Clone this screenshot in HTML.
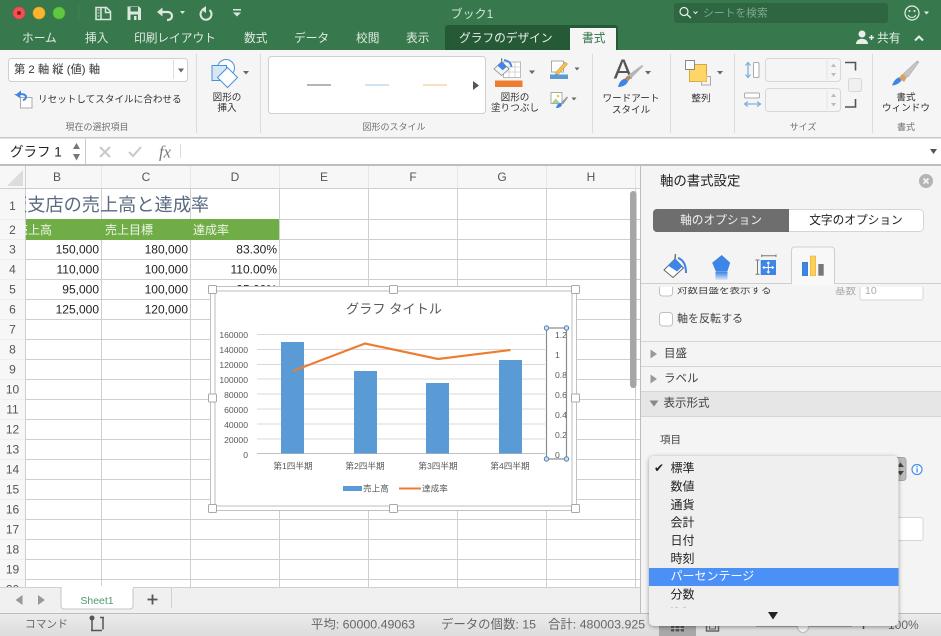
<!DOCTYPE html>
<html><head><meta charset="utf-8">
<style>
html,body{margin:0;padding:0;background:#fff;width:941px;height:636px;overflow:hidden}
svg{display:block}
text{font-family:"Liberation Sans","Noto Sans CJK JP",sans-serif;dominant-baseline:central;fill:#333;font-size:12px}
.m{text-anchor:middle}.e{text-anchor:end}
.tab{fill:#dfeae2;font-size:11.7px}
.rb{font-size:9.6px;fill:#333}
.gl{font-size:9px;fill:#707070}
.rh{font-size:12px;fill:#555;text-anchor:middle}
.n{font-size:12px;fill:#222;text-anchor:end}
.ax{font-size:8.6px;fill:#595959}
.it{font-size:12px;fill:#222}
.st{font-size:12.4px;fill:#666}
</style></head><body>
<svg width="941" height="636" viewBox="0 0 941 636" xmlns="http://www.w3.org/2000/svg">
<defs>
<linearGradient id="sb" x1="0" y1="0" x2="0" y2="1"><stop offset="0" stop-color="#ececec"/><stop offset="1" stop-color="#dcdcdc"/></linearGradient>
<linearGradient id="pg" x1="0" y1="0" x2="0" y2="1"><stop offset="0" stop-color="#3d85e6"/><stop offset="1" stop-color="#3d85e6" stop-opacity=".1"/></linearGradient>
<clipPath id="c1"><rect x="25" y="189" width="400" height="30"/></clipPath>
<clipPath id="c2"><rect x="25" y="219" width="80" height="21"/></clipPath>
<clipPath id="c3"><rect x="641" y="287" width="299" height="60"/></clipPath>
<clipPath id="c4"><rect x="0" y="580" width="25" height="7"/></clipPath>
<filter id="sh" x="-10%" y="-10%" width="120%" height="120%"><feDropShadow dx="0" dy="1" stdDeviation="2" flood-color="#000" flood-opacity=".4"/></filter>
</defs>

<!-- title bar -->
<rect width="941" height="50" fill="#37794c"/>
<circle cx="19" cy="13" r="6" fill="#f25056" stroke="#d8403f" stroke-width=".6"/><circle cx="19" cy="13" r="2" fill="#8c1c1a"/>
<circle cx="39" cy="13" r="6" fill="#fbb52e" stroke="#dd9a1e" stroke-width=".6"/>
<circle cx="59" cy="13" r="6" fill="#5fc840" stroke="#4aa92f" stroke-width=".6"/>
<line x1="79" y1="5" x2="79" y2="21" stroke="#3f8056"/>
<!-- qat icons -->
<g fill="none" stroke="#dbe7df" stroke-width="1.500">
<path d="M96 7.500h10.500l4 4v8h-14.500z"/><path d="M101 7.500v12" /><path d="M105.500 7.500v5h5" />
</g>
<path d="M97.500 10h2M97.500 13h2M97.500 16h2" stroke="#dbe7df"/>
<path d="M127.500 6.500h11.500l2 2v11.500h-13.500z" fill="#dbe7df"/>
<rect x="130.500" y="7" width="7.500" height="4.500" fill="#37794c"/><rect x="130.500" y="14.500" width="7.500" height="5.500" fill="#37794c"/><rect x="134" y="16" width="2.500" height="4" fill="#dbe7df"/>
<path d="M162 12h6a4 4 0 0 1 0 8h-1" fill="none" stroke="#dbe7df" stroke-width="2.200"/>
<path d="M157 12l5.500-4.500v9z" fill="#dbe7df"/>
<path d="M209.500 10a5.500 5.500 0 1 1-7.500 0.500" fill="none" stroke="#dbe7df" stroke-width="2"/>
<path d="M206 6v7l-5-3.500z" fill="#dbe7df" transform="translate(0 0)"/>
<path d="M180 11h5l-2.500 3z" fill="#dbe7df"/>
<rect x="233" y="9" width="8" height="1.500" fill="#dbe7df"/><path d="M233 12.500h8l-4 4z" fill="#dbe7df"/>
<text x="472" y="14" class="m" style="fill:#d5e3d9;font-size:12px">ブック1</text>
<rect x="674" y="3" width="214" height="20" rx="3" fill="#2d6640"/>
<circle cx="684" cy="11.500" r="4" fill="none" stroke="#e6efe9" stroke-width="1.200"/><line x1="687" y1="14.500" x2="691" y2="18" stroke="#e6efe9" stroke-width="1.300"/>
<path d="M693.500 11.500l2 2 2-2" fill="none" stroke="#e6efe9"/>
<text x="703" y="13.500" style="fill:#7fa98d;font-size:10.800px">シートを検索</text>
<circle cx="912" cy="13" r="7" fill="none" stroke="#e6efe9" stroke-width="1.200"/><circle cx="909.500" cy="11" r="1" fill="#e6efe9"/><circle cx="914.500" cy="11" r="1" fill="#e6efe9"/><path d="M908 15a4.500 4.500 0 0 0 8 0" fill="none" stroke="#e6efe9"/>
<path d="M924 11.500h5l-2.500 3z" fill="#e6efe9"/>
<!-- tabs -->
<path d="M445 50V28a3 3 0 0 1 3-3h167a3 3 0 0 1 3 3v22z" fill="#265a36"/>
<path d="M570 50V28h46v22z" fill="#f5f5f5"/>
<text x="22" y="38.500" class="tab">ホーム</text>
<text x="85" y="38.500" class="tab">挿入</text>
<text x="134" y="38.500" class="tab">印刷レイアウト</text>
<text x="244" y="38.500" class="tab">数式</text>
<text x="294" y="38.500" class="tab">データ</text>
<text x="356" y="38.500" class="tab">校閲</text>
<text x="406" y="38.500" class="tab">表示</text>
<text x="459" y="38.500" class="tab" style="fill:#e6efe9">グラフのデザイン</text>
<text x="582" y="38.500" class="tab" style="fill:#2e7048">書式</text>
<circle cx="862" cy="34" r="3.500" fill="#e6efe9"/><path d="M856 44c0-7 12-7 12 0z" fill="#e6efe9"/><path d="M869 37.500h5M871.500 35v5" stroke="#e6efe9" stroke-width="1.500"/>
<text x="877" y="38.500" class="tab" style="fill:#e6efe9">共有</text>
<path d="M915 40.500l4-4 4 4" fill="none" stroke="#e6efe9" stroke-width="2"/>

<!-- ribbon -->
<rect y="50" width="941" height="87" fill="#f5f5f5"/>
<rect y="137" width="941" height="1.500" fill="#c6c6c6"/>
<g stroke="#dcdcdc"><line x1="196.500" y1="54" x2="196.500" y2="133"/><line x1="260.500" y1="54" x2="260.500" y2="133"/><line x1="592.500" y1="54" x2="592.500" y2="133"/><line x1="670.500" y1="54" x2="670.500" y2="133"/><line x1="734.500" y1="54" x2="734.500" y2="133"/><line x1="872.500" y1="54" x2="872.500" y2="133"/></g>
<rect x="8.500" y="58.500" width="179" height="23" rx="3" fill="#fff" stroke="#cfcfcf"/>
<text x="14" y="70" style="font-size:11.300px">第 2 軸 縦 (値) 軸</text>
<line x1="173.500" y1="60" x2="173.500" y2="79" stroke="#ddd"/><path d="M178 68.500h6l-3 4z" fill="#666"/>
<!-- reset icon -->
<rect x="20.500" y="97.500" width="11.500" height="10.500" fill="#fff" stroke="#aaa"/>
<path d="M17 95l3-2.500v1.500c4 0 6 1 6 3s-2 3-3 3" fill="none" stroke="#3d85e6" stroke-width="2"/><path d="M14 94h6.500v4.500z" fill="#3d85e6"/>
<text x="38" y="100" class="rb">リセットしてスタイルに合わせる</text>
<text x="97" y="127" class="m gl">現在の選択項目</text>
<!-- shape -->
<circle cx="226" cy="68" r="8.500" fill="#fff" stroke="#4a90d9"/>
<rect x="212" y="65.500" width="14.500" height="15" fill="#d6e6f6" stroke="#4a90d9"/>
<path d="M227.500 67.500l10 10-10 10-10-10z" fill="#fff" stroke="#4a90d9"/>
<path d="M243 71h6l-3 3.500z" fill="#666"/>
<text x="227" y="98" class="m rb">図形の</text><text x="227" y="108.500" class="m rb">挿入</text>
<!-- gallery -->
<rect x="268.500" y="56.500" width="217" height="57" rx="3" fill="#fff" stroke="#cfcfcf"/>
<rect x="307" y="84" width="24" height="2" fill="#b5b5b5"/><rect x="365" y="84" width="24" height="2" fill="#d0e3f3"/><rect x="423" y="84" width="24" height="2" fill="#f8dfc0"/>
<path d="M473 81v9l6-4.500z" fill="#555"/>
<text x="394" y="127" class="m gl">図形のスタイル</text>
<!-- fill -->
<rect x="503.500" y="62" width="17" height="15.500" fill="#fff" stroke="#bbb"/><path d="M503 67h17M503 72h17M509 62v15M515 62v15" stroke="#ccc" stroke-width=".8"/>
<path d="M494 69l7.700-7.300 7.300 7.300-7.300 6.500z" fill="#f5f5f5" stroke="#888" stroke-width=".8"/><path d="M497.500 65.500l4.200-3.800 5 5-4 3.500z" fill="#3d85e6"/><path d="M501.700 61.700v-3.500" stroke="#777" stroke-width="1.200"/>
<path d="M504 60c5 1 7 3 7.500 7" fill="none" stroke="#3d85e6" stroke-width="1.800"/>
<rect x="495" y="80.500" width="27.500" height="6.500" fill="#ed7d31"/>
<path d="M529 70.500h6l-3 3.500z" fill="#666"/>
<text x="515" y="98" class="m rb">図形の</text><text x="515" y="108.500" class="m rb">塗りつぶし</text>
<!-- line -->
<rect x="551.500" y="61" width="12" height="11" fill="#fff" stroke="#aaa"/>
<path d="M556 72l9-10 2.500 2-9 10-3 .5z" fill="#f3c24b" stroke="#b07a1e" stroke-width=".5"/>
<rect x="550" y="74.500" width="18" height="4.500" fill="#5b9bd5"/>
<path d="M574.500 67.500h5l-2.500 3z" fill="#666"/>
<rect x="551" y="92.500" width="11" height="11" fill="#fff" stroke="#aaa"/><path d="M552 103l3.500-4.500 4.500 4.500z" fill="#a9d18e"/><circle cx="558" cy="96" r="1.300" fill="#f3c24b"/>
<path d="M556 108c1-4 3-5 5-5l1 2c-1 2-3 3-6 3z" fill="#3d85e6"/><path d="M561 102.500l6-6 1 1-5 7z" fill="#999"/>
<path d="M571.500 97.500h5l-2.500 3z" fill="#666"/>
<!-- wordart -->
<text x="623" y="69" class="m" style="font-size:28px;fill:#555;font-family:'Liberation Sans'">A</text>
<path d="M618 87c1-5 4-8 7.500-8.500l2.500 3c-1 3-5 5.500-10 5.500z" fill="#3d85e6"/><path d="M625 78.500l2.500-3 3 3-2.500 3z" fill="#b98a58"/><path d="M628 75l14-10 1.500 1-12.500 12.500z" fill="#b5b5b5"/>
<path d="M645 71h6l-3 3.500z" fill="#666"/>
<text x="631" y="99" class="m rb">ワードアート</text><text x="631" y="110.500" class="m rb">スタイル</text>
<!-- arrange -->
<rect x="689.500" y="64.500" width="17" height="17" fill="#fdd667" stroke="#d9a93c"/>
<rect x="685.500" y="60.500" width="9" height="9" fill="#fff" stroke="#888"/>
<rect x="701.500" y="76.500" width="9" height="8.500" fill="none" stroke="#aaa"/><rect x="700" y="75" width="6.500" height="6.500" fill="#fdd667"/>
<path d="M717 71h6l-3 3.500z" fill="#666"/>
<text x="701" y="99" class="m rb">整列</text>
<!-- size -->
<path d="M748 63v14M745.500 65.500l2.500-3 2.500 3M745.500 74.500l2.500 3 2.500-3" fill="none" stroke="#7fb1de" stroke-width="1.300"/>
<rect x="753.500" y="62.500" width="5.500" height="15" rx="1" fill="#fff" stroke="#aaa"/>
<rect x="744.500" y="93" width="15" height="5" rx="1" fill="#fff" stroke="#aaa"/>
<path d="M745 104h15M748 101.500l-3.500 2.500 3.500 2.500M757 101.500l3.500 2.500-3.500 2.500" fill="none" stroke="#7fb1de" stroke-width="1.300"/>
<rect x="765.500" y="58.500" width="75" height="23" rx="3" fill="#f5f5f5" stroke="#d8d8d8"/>
<rect x="765.500" y="88.500" width="75" height="23" rx="3" fill="#f5f5f5" stroke="#d8d8d8"/>
<line x1="827" y1="60" x2="827" y2="80" stroke="#e2e2e2"/><line x1="827" y1="90" x2="827" y2="110" stroke="#e2e2e2"/>
<path d="M831 67h5l-2.500-3.500zM831 73h5l-2.500 3.500zM831 97h5l-2.500-3.500zM831 103h5l-2.500 3.500z" fill="#bbb"/>
<path d="M845 62.500h10.500v8M845 107h10.500v-8" fill="none" stroke="#555" stroke-width="1.600"/>
<rect x="848.500" y="78.500" width="13" height="13" rx="2" fill="#f0f0f0" stroke="#d8d8d8"/>
<text x="803" y="127" class="m gl">サイズ</text>
<!-- format -->
<path d="M892 85.500c2-6 6-9 10-8.500 1 3-3 8-10 8.500z" fill="#3d85e6"/><path d="M899 78l3-4 5 3-3 5z" fill="#d9a05f"/><path d="M903 74l14-13 2 1-11 15z" fill="#c4c4c4" stroke="#999" stroke-width=".5"/>
<text x="906" y="98" class="m rb">書式</text><text x="906" y="108.500" class="m rb">ウィンドウ</text>
<text x="906" y="127" class="m gl">書式</text>

<!-- formula bar -->
<rect y="138.500" width="941" height="26" fill="#fff"/>
<text x="10" y="152" style="font-size:13.500px;fill:#222">グラフ 1</text>
<path d="M73 149h7l-3.500-6zM73 154h7l-3.500 6.500z" fill="#777"/>
<line x1="85.500" y1="139" x2="85.500" y2="164" stroke="#c9c9c9"/>
<path d="M100 147l10 10M110 147l-10 10" stroke="#c9c9c9" stroke-width="2"/>
<path d="M129 152l4 4 8-9" fill="none" stroke="#c9c9c9" stroke-width="2"/>
<text x="159" y="152" style="font-size:16.500px;font-style:italic;font-family:'Liberation Serif';fill:#777">fx</text>
<line x1="180.500" y1="144" x2="180.500" y2="158" stroke="#ddd"/>
<path d="M930 149h7l-3.500 5z" fill="#555"/>
<rect y="164" width="941" height="2" fill="#bdbdbd"/>

<!-- grid -->
<rect y="166" width="640" height="421" fill="#fff"/>
<rect y="166" width="640" height="22" fill="#f7f7f7"/>
<rect y="166" width="25" height="421" fill="#f7f7f7"/>
<path d="M23 170v16h-16z" fill="#dcdcdc"/>
<g stroke="#cfcfcf" fill="none">
<path d="M25 219.500H640M25 239.500H640M25 259.500H640M25 279.500H640M25 299.500H640M25 319.500H640M25 339.500H640M25 359.500H640M25 379.500H640M25 399.500H640M25 419.500H640M25 439.500H640M25 459.500H640M25 479.500H640M25 499.500H640M25 519.500H640M25 539.500H640M25 559.500H640M25 579.500H640"/>
<path d="M0 188.500H640"/>
<path d="M25.500 166V587M101.500 188V587M190.500 188V587M279.500 188V587M368.500 188V587M457.500 188V587M546.500 188V587M635.500 188V587"/>
</g>
<path d="M101.500 166V188M190.500 166V188M279.500 166V188M368.500 166V188M457.500 166V188M546.500 166V188M635.500 166V188" stroke="#e6e6e6"/>
<path d="M0 219.500H25M0 239.500H25M0 259.500H25M0 279.500H25M0 299.500H25M0 319.500H25M0 339.500H25M0 359.500H25M0 379.500H25M0 399.500H25M0 419.500H25M0 439.500H25M0 459.500H25M0 479.500H25M0 499.500H25M0 519.500H25M0 539.500H25M0 559.500H25M0 579.500H25" stroke="#eeeeee"/>
<rect x="26" y="219" width="253" height="21" fill="#70ad47"/>
<text x="57" y="177" class="rh">B</text><text x="146" y="177" class="rh">C</text><text x="235" y="177" class="rh">D</text><text x="324" y="177" class="rh">E</text><text x="413" y="177" class="rh">F</text><text x="502" y="177" class="rh">G</text><text x="591" y="177" class="rh">H</text>
<text x="12.500" y="206" class="rh">1</text><text x="12.500" y="230" class="rh">2</text><text x="12.500" y="249.500" class="rh">3</text><text x="12.500" y="269.500" class="rh">4</text><text x="12.500" y="289.500" class="rh">5</text><text x="12.500" y="309.500" class="rh">6</text><text x="12.500" y="329.500" class="rh">7</text><text x="12.500" y="349.500" class="rh">8</text><text x="12.500" y="369.500" class="rh">9</text><text x="12.500" y="389.500" class="rh">10</text><text x="12.500" y="409.500" class="rh">11</text><text x="12.500" y="429.500" class="rh">12</text><text x="12.500" y="449.500" class="rh">13</text><text x="12.500" y="469.500" class="rh">14</text><text x="12.500" y="489.500" class="rh">15</text><text x="12.500" y="509.500" class="rh">16</text><text x="12.500" y="529.500" class="rh">17</text><text x="12.500" y="549.500" class="rh">18</text><text x="12.500" y="569.500" class="rh">19</text>
<g clip-path="url(#c4)"><text x="12.500" y="589.500" class="rh">20</text></g>
<g clip-path="url(#c1)"><text x="9" y="205" style="font-size:18.200px;fill:#5a6a80">阪支店の売上高と達成率</text></g>
<g clip-path="url(#c2)"><text x="16" y="230" style="font-size:12px;fill:#eef5e8">売上高</text></g>
<text x="105" y="230" style="font-size:12px;fill:#eef5e8">売上目標</text>
<text x="193" y="230" style="font-size:12px;fill:#eef5e8">達成率</text>
<text x="99" y="249.500" class="n">150,000</text><text x="188" y="249.500" class="n">180,000</text><text x="277" y="249.500" class="n">83.30%</text>
<text x="99" y="269.500" class="n">110,000</text><text x="188" y="269.500" class="n">100,000</text><text x="277" y="269.500" class="n">110.00%</text>
<text x="99" y="289.500" class="n">95,000</text><text x="188" y="289.500" class="n">100,000</text><text x="277" y="289.500" class="n">95.00%</text>
<text x="99" y="309.500" class="n">125,000</text><text x="188" y="309.500" class="n">120,000</text>
<rect x="630" y="191" width="6.500" height="197" rx="3.200" fill="#a6a6a6"/>

<!-- chart -->
<rect x="210.500" y="286.500" width="366" height="224" fill="#fff" stroke="#c0c0c0"/>
<rect x="215" y="291" width="357" height="215" fill="#fff" stroke="#bdbdbd"/>
<g stroke="#d9d9d9"><path d="M257 334.500H545M257 349.500H545M257 364.500H545M257 379H545M257 394H545M257 409H545M257 424H545M257 439H545"/></g>
<path d="M257 453.500H545" stroke="#bfbfbf"/>
<rect x="281" y="342" width="23" height="111.500" fill="#5b9bd5"/><rect x="354" y="371" width="23" height="82.500" fill="#5b9bd5"/><rect x="426" y="383" width="23" height="70.500" fill="#5b9bd5"/><rect x="499" y="360" width="23" height="93.500" fill="#5b9bd5"/>
<path d="M293 371L365 343.500L438 359L510.500 350" fill="none" stroke="#ed7d31" stroke-width="2.200"/>
<text x="394" y="309" class="m" style="font-size:13.200px;fill:#595959">グラフ タイトル</text>
<text x="248" y="335" class="ax e">160000</text><text x="248" y="350" class="ax e">140000</text><text x="248" y="365" class="ax e">120000</text><text x="248" y="380" class="ax e">100000</text><text x="248" y="395" class="ax e">80000</text><text x="248" y="410" class="ax e">60000</text><text x="248" y="425" class="ax e">40000</text><text x="248" y="440" class="ax e">20000</text><text x="248" y="455" class="ax e">0</text>
<text x="293" y="466" class="ax m">第1四半期</text><text x="365" y="466" class="ax m">第2四半期</text><text x="438" y="466" class="ax m">第3四半期</text><text x="510" y="466" class="ax m">第4四半期</text>
<rect x="343" y="486" width="19" height="5" fill="#5b9bd5"/><text x="363" y="488.500" class="ax">売上高</text>
<line x1="399" y1="488.500" x2="421" y2="488.500" stroke="#ed7d31" stroke-width="2"/><text x="422" y="488.500" class="ax">達成率</text>
<text x="555" y="335" class="ax">1.2</text><text x="555" y="355" class="ax">1</text><text x="555" y="375" class="ax">0.8</text><text x="555" y="395" class="ax">0.6</text><text x="555" y="415" class="ax">0.4</text><text x="555" y="435" class="ax">0.2</text><text x="555" y="455" class="ax">0</text>
<rect x="546.500" y="328" width="20" height="131" fill="none" stroke="#8a8a8a" stroke-width="1.200"/>
<g fill="#cfe0f0" stroke="#4f7fae"><circle cx="546.500" cy="328" r="2.200"/><circle cx="566.500" cy="328" r="2.200"/><circle cx="546.500" cy="459" r="2.200"/><circle cx="566.500" cy="459" r="2.200"/></g>
<g fill="#fff" stroke="#a8a8a8"><rect x="208.500" y="285.500" width="8" height="8" rx="1"/><rect x="389.500" y="285.500" width="8" height="8" rx="1"/><rect x="571.500" y="285.500" width="8" height="8" rx="1"/><rect x="208.500" y="394" width="8" height="8" rx="1"/><rect x="571.500" y="394" width="8" height="8" rx="1"/><rect x="208.500" y="504.500" width="8" height="8" rx="1"/><rect x="389.500" y="504.500" width="8" height="8" rx="1"/><rect x="571.500" y="504.500" width="8" height="8" rx="1"/></g>

<!-- pane -->
<rect x="640" y="166" width="301" height="448" fill="#f4f4f4"/>
<line x1="640.500" y1="166" x2="640.500" y2="614" stroke="#bdbdbd"/>
<text x="660" y="181" style="fill:#222;font-size:13.400px">軸の書式設定</text>
<circle cx="926" cy="181" r="7" fill="#b4b4b4"/><path d="M923.500 178.500l5 5M928.500 178.500l-5 5" stroke="#f4f4f4" stroke-width="1.800"/>
<rect x="653.500" y="209.500" width="270" height="22" rx="4" fill="#fff" stroke="#d5d5d5"/>
<path d="M789 209H657a4 4 0 0 0-4 4v15a4 4 0 0 0 4 4h132z" fill="#6e6e6e"/>
<text x="721" y="220.500" class="m" style="font-size:11.700px;fill:#f0f0f0">軸のオプション</text>
<text x="856" y="220.500" class="m" style="font-size:11.700px;fill:#222">文字のオプション</text>
<line x1="641" y1="283.500" x2="941" y2="283.500" stroke="#cfcfcf"/>
<path d="M791.500 284V250a3 3 0 0 1 3-3h37a3 3 0 0 1 3 3v34" fill="#f8f8f8" stroke="#cfcfcf"/>
<rect x="792" y="283" width="42" height="2" fill="#f8f8f8"/>
<!-- pane icons -->
<path d="M664 270l11-11 8.500 9-10.500 9.500z" fill="#fff" stroke="#666"/>
<path d="M668 265.500l7-6.500 7.500 7.500-5.500 5z" fill="#3d85e6"/>
<path d="M675 259.500l.5-5.500" stroke="#777" stroke-width="1.500" fill="none"/><path d="M678 258c6 2 8 8 8 15" fill="none" stroke="#3d85e6" stroke-width="2"/>
<path d="M721.700 255l8.500 7.700-3 9h-11.200l-3.800-9z" fill="#3d85e6"/><rect x="715.500" y="272" width="12" height="8" fill="url(#pg)"/>
<path d="M761.700 255.700h14.300M761.700 254.500v2.500M776 254.500v2.500M755.500 260h4M755.500 274.300h4M757.500 260v14.300" stroke="#777" fill="none"/>
<rect x="760.700" y="260" width="15.300" height="15" fill="#3d85e6"/><path d="M768.300 262.500v10M763.300 267.500h10M767 263.500l1.300-1.500 1.300 1.500M767 271.500l1.300 1.500 1.300-1.500M764.500 266.200l-1.500 1.300 1.500 1.300M772 266.200l1.500 1.300-1.500 1.300" stroke="#fff" fill="none"/>
<rect x="802.300" y="262.300" width="5.400" height="13.400" fill="#3d85e6" stroke="#2f6fc4" stroke-width=".5"/><rect x="810.300" y="256" width="5.400" height="19.700" fill="#fdd05a" stroke="#d9a93c" stroke-width=".5"/><rect x="818.300" y="264" width="5.400" height="11.700" fill="#777"/>
<!-- options -->
<g clip-path="url(#c3)">
<rect x="659.500" y="283" width="13" height="13" rx="3" fill="#fff" stroke="#c0c0c0"/>
<text x="677" y="290" style="font-size:10.500px;fill:#444">対数目盛を表示する</text>
<text x="835" y="291" style="font-size:10.500px;fill:#aaa">基数</text>
<rect x="860" y="280" width="63" height="20" rx="2" fill="#fff" stroke="#d5d5d5"/>
<text x="865" y="291" style="font-size:10.500px;fill:#aaa">10</text>
</g>
<rect x="659.500" y="312.500" width="13" height="13.500" rx="3" fill="#fff" stroke="#c0c0c0"/>
<text x="677" y="319" style="font-size:11px;fill:#444">軸を反転する</text>
<line x1="641" y1="341.500" x2="941" y2="341.500" stroke="#d5d5d5"/><line x1="641" y1="366.500" x2="941" y2="366.500" stroke="#d5d5d5"/>
<rect x="641" y="391" width="300" height="25" fill="#e6e6e6"/>
<line x1="641" y1="391.500" x2="941" y2="391.500" stroke="#d5d5d5"/><line x1="641" y1="416.500" x2="941" y2="416.500" stroke="#d5d5d5"/>
<path d="M650.500 349.500v9l6.500-4.500zM650.500 374.500v9l6.500-4.500z" fill="#999"/><path d="M649.500 400.500h9l-4.500 6z" fill="#888"/>
<text x="664" y="354" style="font-size:11.500px;fill:#444">目盛</text>
<text x="664" y="379" style="font-size:11.500px;fill:#444">ラベル</text>
<text x="663.500" y="403.500" style="font-size:11.500px;fill:#444">表示形式</text>
<text x="660" y="440" style="font-size:10.500px;fill:#444">項目</text>
<rect x="880" y="457.500" width="26" height="23" rx="3" fill="#bbb" stroke="#a5a5a5"/>
<path d="M897 467h7l-3.500-4.500zM897 471h7l-3.500 4.500z" fill="#444"/>
<circle cx="917" cy="469.500" r="5" fill="#fff" stroke="#4a90f0" stroke-width="1.200"/><rect x="916.400" y="468" width="1.300" height="4.500" fill="#4a90f0"/><rect x="916.400" y="466" width="1.300" height="1.300" fill="#4a90f0"/>
<rect x="860" y="517.500" width="63" height="23" rx="2" fill="#fff" stroke="#d5d5d5"/>

<!-- tab bar -->
<rect y="587" width="640" height="26" fill="#f0f0f0"/>
<line x1="0" y1="587.500" x2="640" y2="587.500" stroke="#d0d0d0"/>
<path d="M61 587.500V606a3 3 0 0 0 3 3h66a3 3 0 0 0 3-3v-18.500" fill="#fff" stroke="#c5c5c5"/>
<rect x="62" y="586" width="71" height="3" fill="#fff"/>
<text x="97" y="601" class="m" style="font-size:10.500px;fill:#4f9a6f">Sheet1</text>
<path d="M22.500 595v10l-7-5zM38 595v10l7-5z" fill="#999"/>
<path d="M147.500 599.500h10M152.500 594.500v10" stroke="#555" stroke-width="1.800"/>
<line x1="171.500" y1="588" x2="171.500" y2="608" stroke="#d0d0d0"/>
<!-- status -->
<rect y="613" width="941" height="23" fill="url(#sb)"/>
<line x1="0" y1="613.500" x2="941" y2="613.500" stroke="#bdbdbd"/>
<text x="25" y="624.500" style="font-size:10.700px;fill:#666">コマンド</text>
<path d="M100 617.500h4M103 618v11.500M91 630.500h11" stroke="#555" stroke-width="1.500" fill="none"/><circle cx="92" cy="618" r="2.500" fill="#555"/><path d="M92 620v10" stroke="#555" stroke-width="1.500"/>
<text x="311" y="624.500" class="st">平均: 60000.49063</text>
<text x="441" y="624.500" class="st">データの個数: 15</text>
<text x="548" y="624.500" class="st">合計: 480003.925</text>
<rect x="659" y="614" width="37" height="22" fill="#a8a8a8"/>
<rect x="671" y="626" width="13" height="5.500" fill="#555"/><path d="M675 626v6M680 626v6M671 628.500h13" stroke="#ddd" stroke-width=".8"/>
<rect x="706.500" y="623" width="12" height="8" fill="none" stroke="#666" stroke-width="1.500"/><rect x="709.500" y="625" width="6" height="4" fill="none" stroke="#666"/>
<rect x="756" y="625" width="96" height="1.500" fill="#777"/>
<circle cx="803" cy="627" r="5.500" fill="#f5f5f5" stroke="#bbb"/>
<path d="M863.500 620v9" stroke="#555" stroke-width="1.500"/>
<text x="888" y="625" class="st" style="font-size:12px">100%</text>

<!-- dropdown -->
<rect x="649" y="456" width="249.500" height="170" rx="5" fill="#efefef" filter="url(#sh)"/>
<rect x="649" y="568" width="249.500" height="18" fill="#4a90f7"/>
<text x="654" y="468" style="font-size:12px;fill:#222;font-family:'DejaVu Sans'">✔</text>
<text x="670.500" y="468" class="it">標準</text><text x="670.500" y="486.500" class="it">数値</text><text x="670.500" y="505" class="it">通貨</text><text x="670.500" y="522.500" class="it">会計</text><text x="670.500" y="540.500" class="it">日付</text><text x="670.500" y="558.500" class="it">時刻</text>
<text x="670.500" y="576" class="it" style="fill:#fff">パーセンテージ</text>
<text x="670.500" y="594.500" class="it">分数</text>
<path d="M671 607.500h2M675 607.500h3M683 607.500h3" stroke="#ccc" stroke-width="1"/>
<path d="M768 612h10l-5 7.500z" fill="#222"/>
</svg>
</body></html>
